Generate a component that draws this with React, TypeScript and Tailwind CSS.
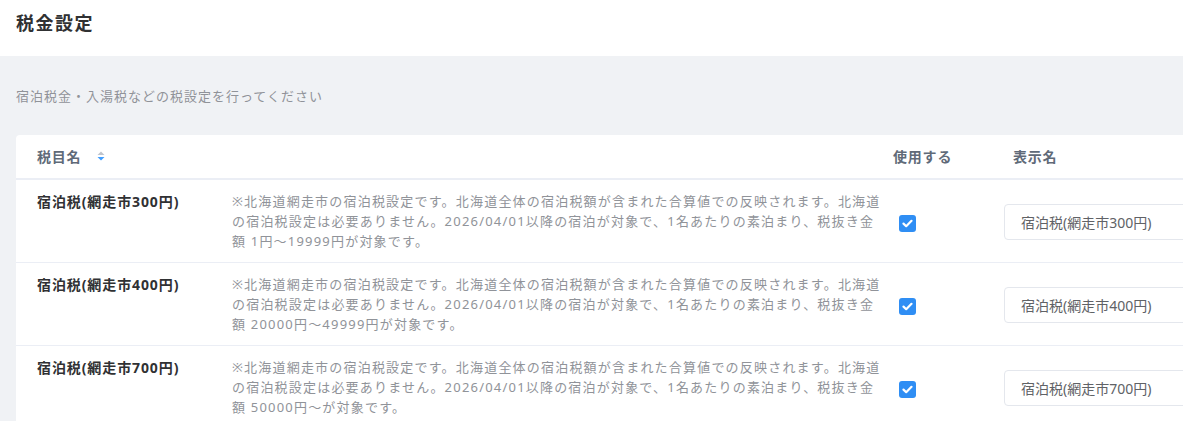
import React from "react";

interface TaxRow {
  id: number;
  name: string;
  note: string;
}

const FONT = { fontFamily: '"Noto Sans", "Noto Sans CJK JP", sans-serif' };

const BASE_NOTE =
  "※北海道網走市の宿泊税設定です。北海道全体の宿泊税額が含まれた合算値での反映されます。北海道の宿泊税設定は必要ありません。2026/04/01以降の宿泊が対象で、1名あたりの素泊まり、税抜き金額 ";

const ROWS: TaxRow[] = [
  { id: 1, name: "宿泊税(網走市300円)", note: BASE_NOTE + "1円〜19999円が対象です。" },
  { id: 2, name: "宿泊税(網走市400円)", note: BASE_NOTE + "20000円〜49999円が対象です。" },
  { id: 3, name: "宿泊税(網走市700円)", note: BASE_NOTE + "50000円〜が対象です。" },
];

function SortIcon() {
  return (
    <svg width="8" height="11" viewBox="0 0 8 11" className="ml-[16px]">
      <path d="M4 0.5 L7.5 4 L0.5 4 Z" fill="#c0c4cc" />
      <path d="M0.5 6 L7.5 6 L4 9.5 Z" fill="#409eff" />
    </svg>
  );
}

function CheckedBox() {
  return (
    <span className="inline-flex h-[17px] w-[17px] items-center justify-center rounded-[3px] bg-[#2f8ef4]">
      <svg width="11" height="9" viewBox="0 0 11 9">
        <path d="M1.5 4.6 L4.2 7.2 L9.5 1.8" fill="none" stroke="#fff" strokeWidth="2.2" strokeLinecap="round" strokeLinejoin="round" />
      </svg>
    </span>
  );
}

export default function App() {
  return (
    <div className="h-[421px] w-full overflow-hidden bg-[#f0f2f5] tracking-[1px]" style={FONT}>
      <div className="h-14 bg-white px-4 pt-[12px]">
        <h1 className="text-[18px] font-bold leading-[23px] tracking-[1.5px] text-[#303133]">税金設定</h1>
      </div>

      <div className="px-4">
        <p className="pt-[30px] pb-[29px] text-[13px] leading-5 text-[#909399]">
          宿泊税金・入湯税などの税設定を行ってください
        </p>

        <div className="w-[1260px] rounded bg-white">
          <div className="grid h-[45px] grid-cols-[216px_661px_111px_1fr] items-center border-b-2 border-[#ebeef5] text-[14px] font-semibold tracking-[0.8px] text-[#606a78]">
            <div className="flex items-center pl-[21px]">
              <span>税目名</span>
              <SortIcon />
            </div>
            <div />
            <div>使用する</div>
            <div className="pl-[9px]">表示名</div>
          </div>

          {ROWS.map((row) => (
            <div
              key={row.id}
              className="grid grid-cols-[216px_661px_111px_1fr] border-b border-[#ebeef5] pt-[11px] pb-[11px]"
            >
              <div className="pl-[21px] pt-[1px] text-[14px] font-bold leading-5 tracking-[0.9px] text-[#303133]">{row.name}</div>
              <div className="w-[650px] text-[13px] leading-5 tracking-[1.2px] text-[#909399]">{row.note}</div>
              <div className="flex items-center pl-[6px] pt-[5px]">
                <CheckedBox />
              </div>
              <div className="flex items-center pt-[2px]">
                <div className="flex h-[36px] w-[240px] items-center rounded border border-[#e4e7ed] px-4 text-[14px] tracking-normal text-[#606266]">
                  {row.name}
                </div>
              </div>
            </div>
          ))}
        </div>
      </div>
    </div>
  );
}
